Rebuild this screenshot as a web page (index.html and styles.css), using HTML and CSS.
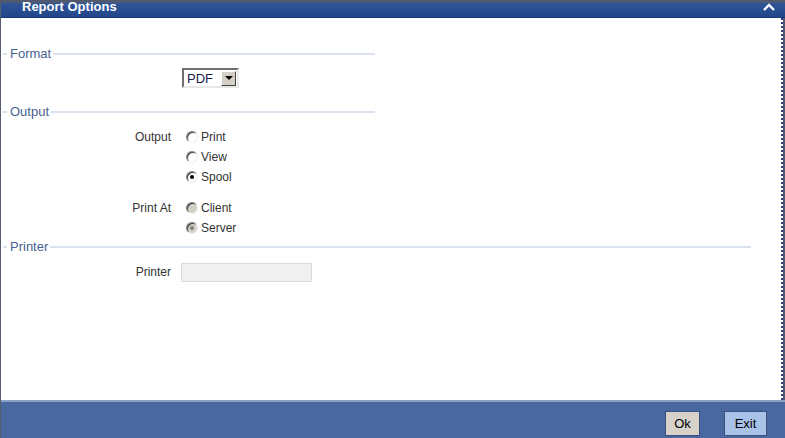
FILE: index.html
```html
<!DOCTYPE html>
<html lang="en">
<head>
  <meta charset="UTF-8" />
  <title>Report Options</title>
  <link rel="stylesheet" href="styles.css">
</head>
<body>
  <div class="window">
    <div class="titlebar">
      <span class="title">Report Options</span>
      <svg class="collapse" width="14" height="10" viewBox="0 0 14 10">
        <path d="M2 8 L7 3 L12 8" fill="none" stroke="#fff" stroke-width="2.4" />
      </svg>
    </div>

    <div class="content">
      <fieldset class="group narrow">
        <legend>Format</legend>
        <div class="row format-row">
          <div class="select">
            <span class="select-value">PDF</span>
            <span class="select-btn">
              <svg width="8" height="5" viewBox="0 0 8 5"><path d="M0 0 H8 L4 4 Z" fill="#000" /></svg>
            </span>
          </div>
        </div>
      </fieldset>

      <fieldset class="group narrow">
        <legend>Output</legend>
        <div class="row field output-row">
          <label class="field-label">Output</label>
          <div class="options">
            <label class="radio"><span class="dot"></span>Print</label>
            <label class="radio"><span class="dot"></span>View</label>
            <label class="radio"><span class="dot checked"></span>Spool</label>
          </div>
        </div>
        <div class="row field print-at">
          <label class="field-label">Print At</label>
          <div class="options">
            <label class="radio"><span class="dot disabled"></span>Client</label>
            <label class="radio"><span class="dot disabled checked"></span>Server</label>
          </div>
        </div>
      </fieldset>

      <fieldset class="group wide">
        <legend>Printer</legend>
        <div class="row field printer-row">
          <label class="field-label">Printer</label>
          <div class="textbox"></div>
        </div>
      </fieldset>
    </div>

    <div class="footer">
      <button class="btn ok">Ok</button>
      <button class="btn exit">Exit</button>
    </div>
  </div>
</body>
</html>
```

FILE: styles.css
```css
* {
  margin: 0;
  padding: 0;
  box-sizing: border-box;
}

body {
  width: 785px;
  height: 438px;
  overflow: hidden;
  background: #4f5a70;
  font-family: Tahoma, "Liberation Sans", Arial, sans-serif;
  font-size: 12px;
  color: #333;
}

.window {
  display: flex;
  flex-direction: column;
  height: 438px;
  padding-top: 3px;
  border-left: 1px solid #555e6e;
}

.titlebar {
  display: flex;
  align-items: center;
  justify-content: space-between;
  height: 15px;
  padding: 0 9px 0 21px;
  background: linear-gradient(#2e5598, #23468a);
  border-bottom: 1px solid #1b3570;
}

.title {
  color: #fff;
  font-weight: bold;
  font-size: 13px;
  line-height: 13px;
  margin-top: -7px;
}

.collapse {
  margin-top: -6px;
}

.content {
  flex: 1;
  background: #fff;
  margin-right: 2px;
  border-right: 2px dotted #2c3f8a;
  padding-top: 30px;
  padding-left: 2px;
}

.group {
  border: none;
  border-top: 2px solid #dbe2ee;
  padding: 0;
  margin: 0;
}

.group.narrow {
  width: 372px;
}

.group.wide {
  width: 748px;
}

.group legend {
  color: #48628f;
  font-size: 13px;
  padding: 0 2px 0 3px;
  margin-left: 4px;
  line-height: 12px;
}

.row {
  display: flex;
}

.format-row {
  padding: 8px 0 18px 179px;
}

.select {
  display: flex;
  align-items: center;
  width: 57px;
  height: 20px;
  border: 2px solid;
  border-color: #6f6f6f #e8e8e8 #e8e8e8 #6f6f6f;
  background: #fff;
}

.select-value {
  flex: 1;
  padding-left: 3px;
  color: #1a1a4a;
  font-size: 13px;
}

.select-btn {
  display: flex;
  align-items: center;
  justify-content: center;
  width: 15px;
  height: 15px;
  margin-right: 1px;
  background: #d4d0c8;
  border: 1px solid;
  border-color: #fff #404040 #404040 #fff;
}

.field {
  gap: 11px;
}

.field-label {
  width: 168px;
  text-align: right;
  line-height: 20px;
  color: #333;
}

.options {
  display: flex;
  flex-direction: column;
  padding-left: 4px;
}

.radio {
  display: flex;
  align-items: center;
  gap: 3px;
  height: 20px;
}

.dot {
  position: relative;
  width: 12px;
  height: 12px;
  border-radius: 50%;
  border: 1px solid;
  border-color: #808080 #f0f0f0 #f0f0f0 #808080;
  background: #fff;
  box-shadow: inset 1px 1px 0 #404040;
}

.dot.checked::after {
  content: "";
  position: absolute;
  left: 3px;
  top: 3px;
  width: 4px;
  height: 4px;
  border-radius: 50%;
  background: #000;
}

.dot.disabled {
  background: #d4d0c8;
}

.dot.disabled.checked::after {
  background: #808080;
}

.output-row {
  margin-top: 9px;
}

.print-at {
  margin-top: 11px;
  margin-bottom: 3px;
}

.printer-row {
  margin-top: 9px;
}

.textbox {
  width: 131px;
  height: 19px;
  margin: 1px 0 0 -1px;
  background: #f0f0f0;
  border: 1px solid #dcdcdc;
}

.footer {
  display: flex;
  justify-content: flex-end;
  align-items: center;
  gap: 24px;
  height: 38px;
  padding: 7px 18px 0 0;
  background: #4a68a0;
  border-top: 2px solid #8aa2c8;
}

.btn {
  height: 25px;
  font-family: Tahoma, "Liberation Sans", Arial, sans-serif;
  font-size: 13px;
  color: #000;
  border: 1px solid #3a5080;
}

.btn.ok {
  width: 35px;
  background: #d6d2ca;
}

.btn.exit {
  width: 43px;
  background: #a9c2e8;
}
```
